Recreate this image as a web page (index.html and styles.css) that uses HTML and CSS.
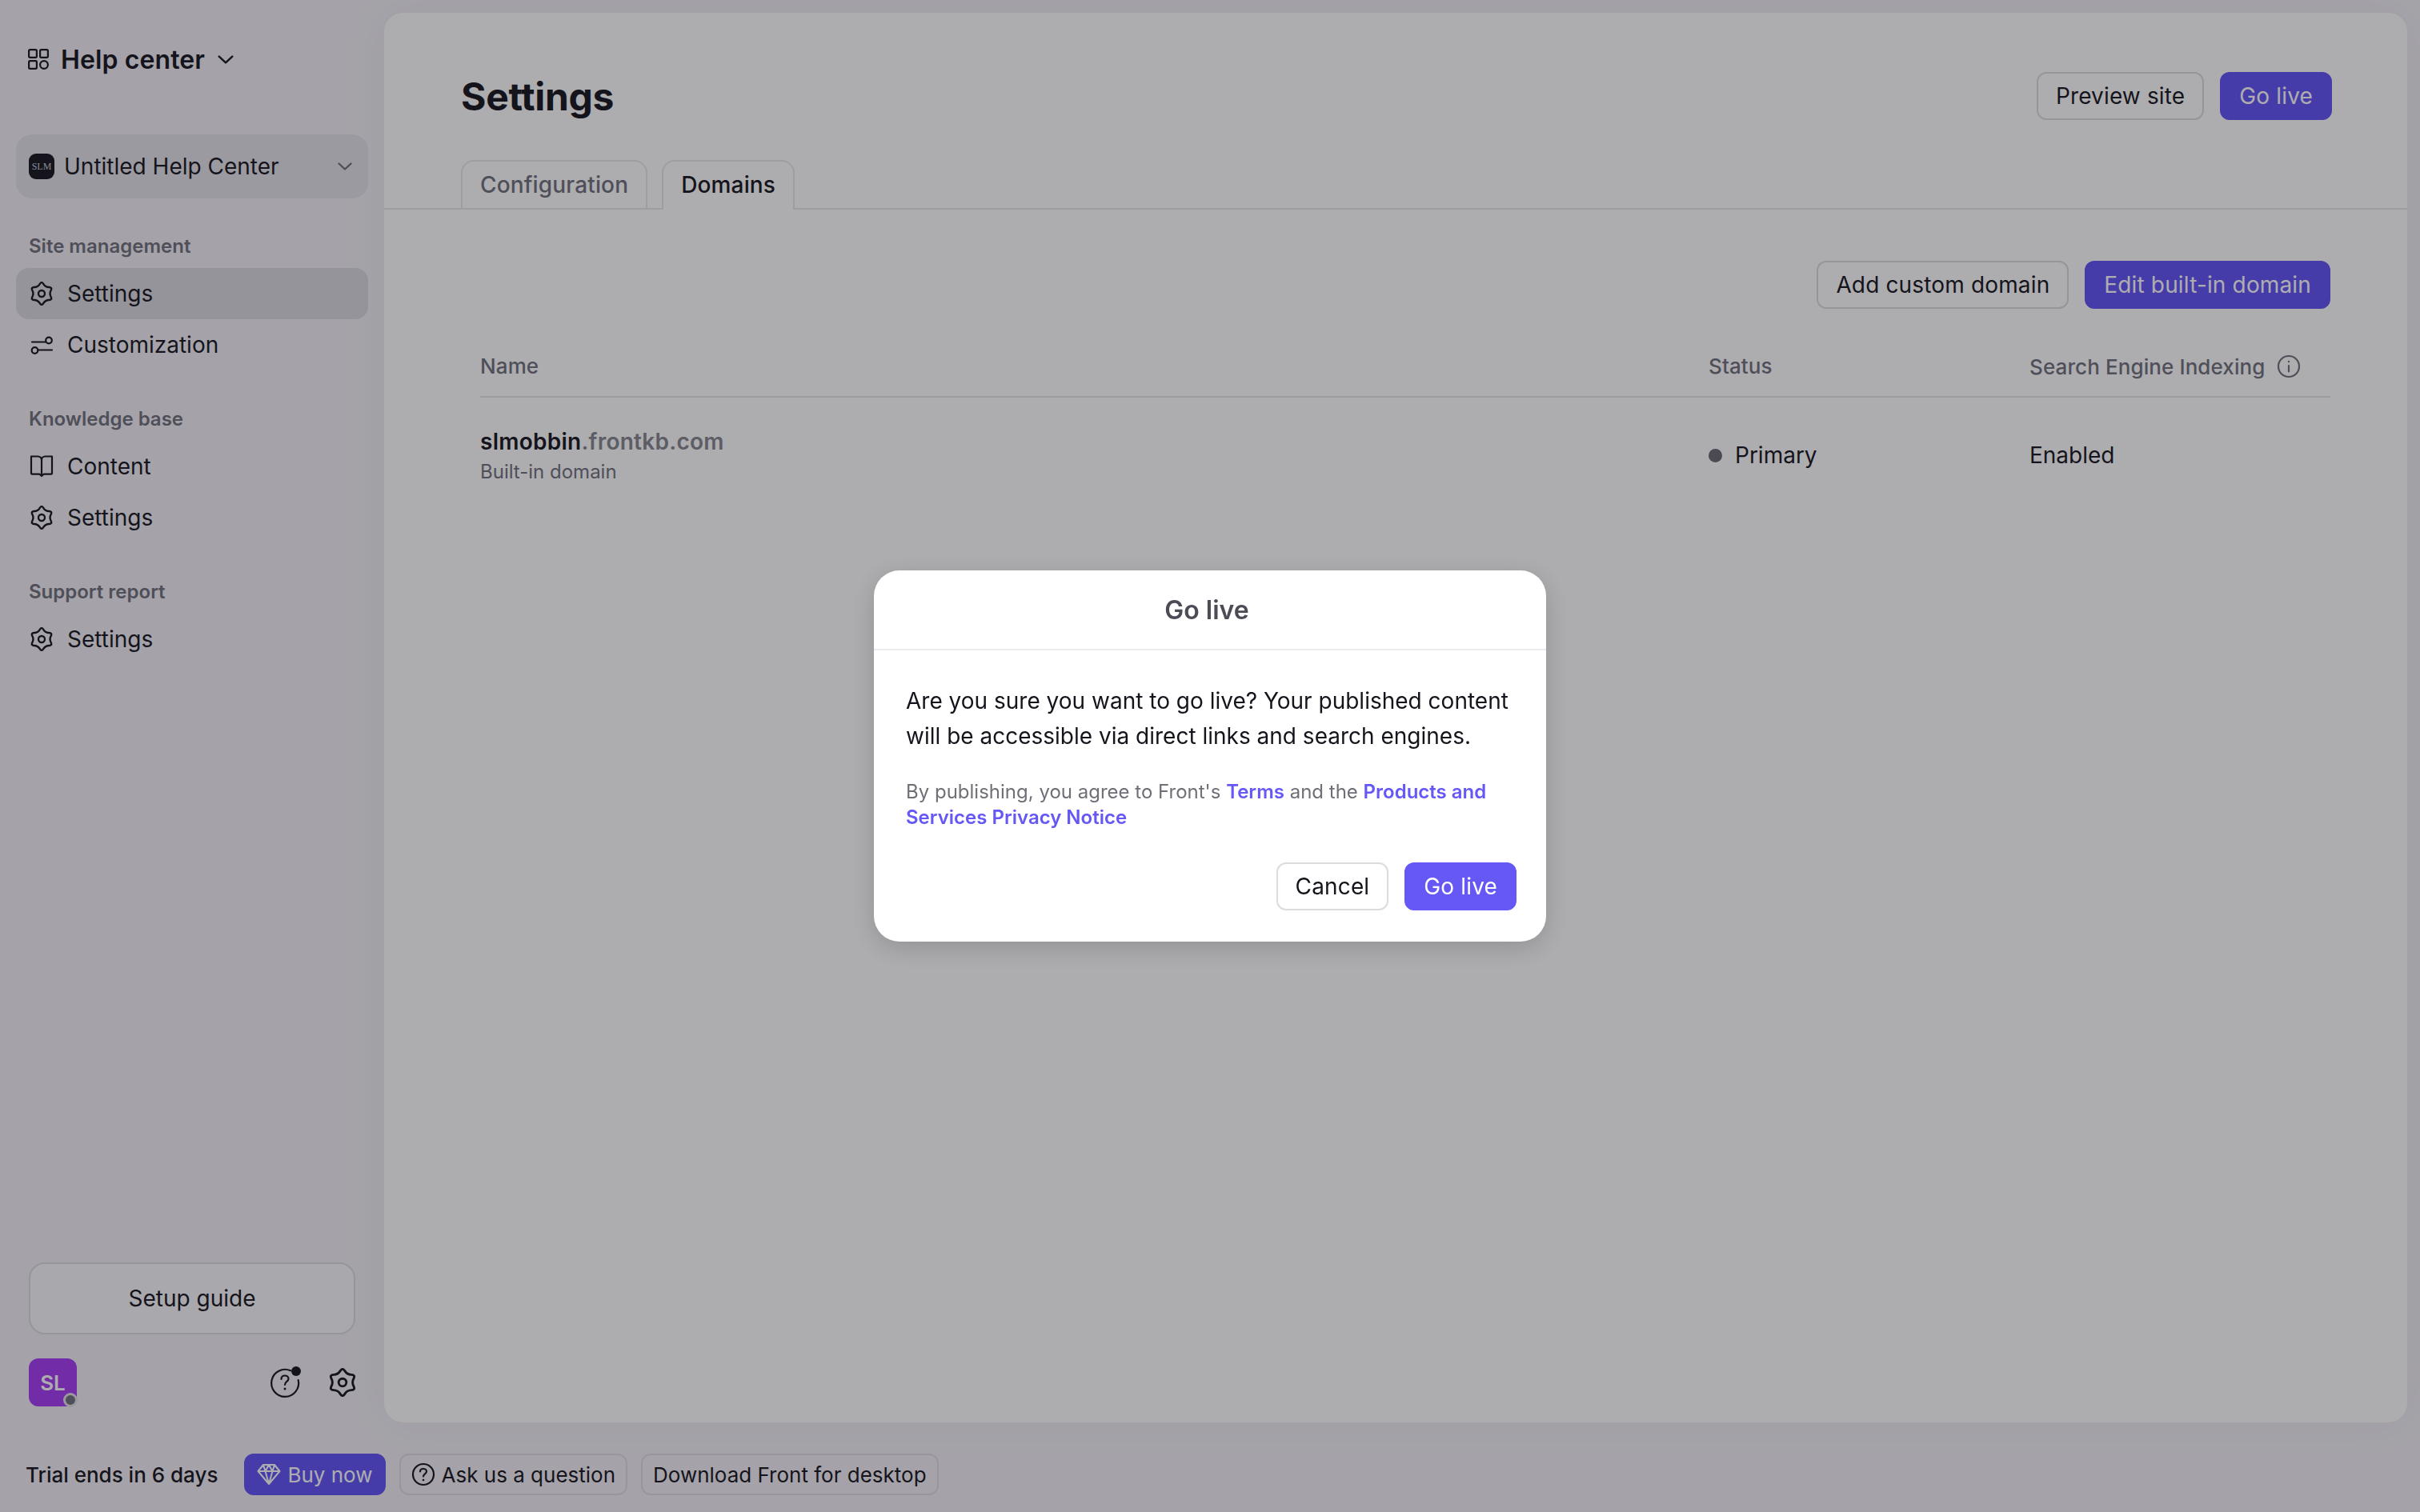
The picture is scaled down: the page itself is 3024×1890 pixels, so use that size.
FILE: index.html
```html
<!DOCTYPE html>
<html>

<head>
    <title>Help center settings</title>
    <link rel="stylesheet" href="styles.css">
</head>

<body>
    <svg class="icon-defs" width="0" height="0">
        <symbol id="gear" viewBox="0 0 24 24">
            <path d="M10.1 2.41Q12 -.6 13.9 2.41Q15.8 5.42 19.36 5.56Q22.91 5.7 21.26 8.85Q19.6 12 21.26 15.15Q22.91 18.3 19.36 18.44Q15.8 18.58 13.9 21.59Q12 24.6 10.1 21.59Q8.2 18.58 4.65 18.44Q1.09 18.3 2.75 15.15Q4.4 12 2.75 8.85Q1.09 5.7 4.65 5.56Q8.2 5.42 10.1 2.41Z" fill="none" stroke="currentColor" stroke-width="1.9" stroke-linejoin="round"/>
            <circle cx="12" cy="12" r="3.2" fill="none" stroke="currentColor" stroke-width="1.9"/>
        </symbol>
        <symbol id="chevron" viewBox="0 0 18 10">
            <path d="M1.5 1.5L9 8.5L16.5 1.5" fill="none" stroke="currentColor" stroke-width="2.2" stroke-linecap="round" stroke-linejoin="round"/>
        </symbol>
    </svg>

    <div class="app">
        <aside class="sidebar">
            <div class="product">
                <svg class="product-icon" viewBox="0 0 26 26" fill="none" stroke="currentColor" stroke-width="2.2">
                    <rect x="1.1" y="1.1" width="9.8" height="9.8" rx="1.6"/>
                    <rect x="15.1" y="1.1" width="9.8" height="9.8" rx="1.6"/>
                    <rect x="1.1" y="15.1" width="9.8" height="9.8" rx="1.6"/>
                    <circle cx="20" cy="20" r="4.9"/>
                </svg>
                <span>Help center</span>
                <svg class="product-chevron"><use href="#chevron"/></svg>
            </div>

            <div class="center-select">
                <div class="center-logo">SLM</div>
                <span class="center-name">Untitled Help Center</span>
                <svg class="center-chevron"><use href="#chevron"/></svg>
            </div>

            <div class="nav-section">
                <div class="nav-label">Site management</div>
                <div class="nav-item active"><svg class="nav-icon"><use href="#gear"/></svg>Settings</div>
                <div class="nav-item">
                    <svg class="nav-icon" viewBox="0 0 30 30" fill="none" stroke="currentColor" stroke-width="2.2" stroke-linecap="round">
                        <path d="M3 11.5H20"/>
                        <circle cx="24" cy="9.5" r="3.8"/>
                        <path d="M11 21.5H28"/>
                        <circle cx="6.5" cy="22" r="3.8"/>
                    </svg>Customization
                </div>
            </div>

            <div class="nav-section">
                <div class="nav-label">Knowledge base</div>
                <div class="nav-item">
                    <svg class="nav-icon" viewBox="0 0 30 30" fill="none" stroke="currentColor" stroke-width="2.2" stroke-linejoin="round">
                        <path d="M15 7C15 4.5 13 2.5 10.5 2.5H2V23.5C2 24.2 2.5 24.7 3.2 24.7H12.4L15 27L17.6 24.7H26.8C27.5 24.7 28 24.2 28 23.5V2.5H19.5C17 2.5 15 4.5 15 7ZM15 7V26"/>
                    </svg>Content
                </div>
                <div class="nav-item"><svg class="nav-icon"><use href="#gear"/></svg>Settings</div>
            </div>

            <div class="nav-section">
                <div class="nav-label">Support report</div>
                <div class="nav-item"><svg class="nav-icon"><use href="#gear"/></svg>Settings</div>
            </div>

            <div class="sidebar-bottom">
                <div class="setup-guide">Setup guide</div>
                <div class="user-row">
                    <div class="avatar">SL<span class="avatar-status"></span></div>
                    <svg class="help-icon" viewBox="0 0 40 40" fill="none">
                        <path d="M27 5.3A17 17 0 1 0 36.7 17" stroke="currentColor" stroke-width="2.2" stroke-linecap="round"/>
                        <path d="M15.5 16C15.5 13 17.5 11.5 20 11.5C22.5 11.5 24.5 13.2 24.5 15.5C24.5 19 20 19 20 23" stroke="currentColor" stroke-width="2.2" stroke-linecap="round"/>
                        <circle cx="20" cy="28" r="1.5" fill="currentColor"/>
                        <circle cx="34" cy="6" r="6" fill="currentColor"/>
                    </svg>
                    <svg class="user-gear"><use href="#gear"/></svg>
                </div>
            </div>
        </aside>

        <main class="main">
            <div class="page-header">
                <h1>Settings</h1>
                <div class="btn-row">
                    <button class="btn">Preview site</button>
                    <button class="btn btn-primary">Go live</button>
                </div>
            </div>

            <div class="tabs">
                <div class="tab">Configuration</div>
                <div class="tab tab-active">Domains</div>
            </div>

            <div class="domains">
                <div class="btn-row domain-actions">
                    <button class="btn">Add custom domain</button>
                    <button class="btn btn-primary">Edit built-in domain</button>
                </div>

                <div class="table-head">
                    <div>Name</div>
                    <div>Status</div>
                    <div class="indexing-head">Search Engine Indexing
                        <svg class="info-icon" viewBox="0 0 30 30" fill="none" stroke="currentColor" stroke-width="2.2" stroke-linecap="round">
                            <circle cx="15" cy="15" r="13"/>
                            <path d="M15 14V21.5"/>
                            <circle cx="15" cy="9" r="1.2" fill="currentColor" stroke="none"/>
                        </svg>
                    </div>
                </div>

                <div class="table-row">
                    <div>
                        <div class="domain-name"><b>slmobbin</b>.frontkb.com</div>
                        <div class="domain-type">Built-in domain</div>
                    </div>
                    <div class="status"><span class="status-dot"></span>Primary</div>
                    <div>Enabled</div>
                </div>
            </div>
        </main>
    </div>

    <div class="bottom-bar">
        <span class="trial">Trial ends in 6 days</span>
        <div class="chip chip-buy">
            <svg class="chip-icon diamond" viewBox="0 0 30 28" fill="none" stroke="currentColor" stroke-width="2" stroke-linejoin="round">
                <path d="M8 2H22L28.5 10L15 26L1.5 10ZM1.5 10H28.5M8 2L10.5 10L15 26L19.5 10L22 2M10.5 10L15 2L19.5 10"/>
            </svg>Buy now
        </div>
        <div class="chip">
            <svg class="chip-icon" viewBox="0 0 30 30" fill="none" stroke="currentColor" stroke-width="2.2" stroke-linecap="round">
                <circle cx="15" cy="15" r="13"/>
                <path d="M11 11.5C11 9 13 8 15 8C17 8 19 9.3 19 11.3C19 14.3 15 14.3 15 17.5"/>
                <circle cx="15" cy="22" r="1.3" fill="currentColor" stroke="none"/>
            </svg>Ask us a question
        </div>
        <div class="chip">Download Front for desktop</div>
    </div>

    <!-- Go live dialog and its backdrop -->
    <div class="backdrop">
        <div class="modal">
            <div class="modal-title">Go live</div>
            <div class="modal-body">
                <p class="modal-text">Are you sure you want to go live? Your published content will be accessible via direct links and search engines.</p>
                <p class="modal-note">By publishing, you agree to Front's <a href="#">Terms</a> and the <a href="#">Products and Services Privacy Notice</a></p>
                <div class="btn-row modal-actions">
                    <button class="btn btn-modal">Cancel</button>
                    <button class="btn btn-primary btn-modal">Go live</button>
                </div>
            </div>
        </div>
    </div>
</body>

</html>
```

FILE: styles.css
```css
* {
    box-sizing: border-box;
}

body {
    font-family: Inter, "Liberation Sans", sans-serif;
    font-size: 28px;
    color: #1f1e27;
    background-color: #f3f1f5;
    margin: 0;
    width: 3024px;
    height: 1890px;
    overflow: hidden;
}

.icon-defs {
    position: absolute;
}

.app {
    display: flex;
    height: 1778px;
}

/* Sidebar */

.sidebar {
    width: 480px;
    padding: 0 20px;
    display: flex;
    flex-direction: column;
    flex-shrink: 0;
}

.product {
    display: flex;
    align-items: center;
    height: 32px;
    margin-top: 58px;
    padding-left: 15px;
    font-size: 32px;
    font-weight: 600;
    letter-spacing: 0.1px;
}

.product-icon {
    width: 26px;
    height: 26px;
    margin-right: 15px;
}

.product-chevron {
    width: 20px;
    height: 11px;
    margin-left: 16px;
}

.center-select {
    display: flex;
    align-items: center;
    height: 80px;
    margin-top: 78px;
    padding: 0 16px;
    background-color: #e6e4e9;
    border-radius: 20px;
}

.center-logo {
    width: 32px;
    height: 32px;
    border-radius: 9px;
    background-color: #1f1e27;
    color: #c9c9cf;
    font-family: "Liberation Serif", serif;
    font-size: 12px;
    display: flex;
    align-items: center;
    justify-content: center;
    flex-shrink: 0;
}

.center-name {
    margin-left: 12px;
    flex: 1;
}

.center-chevron {
    width: 18px;
    height: 10px;
    margin-right: 4px;
    color: #707078;
}

.nav-section {
    margin-bottom: 32px;
}

.center-select + .nav-section {
    margin-top: 31px;
}

.nav-label {
    height: 56px;
    display: flex;
    align-items: center;
    padding-left: 16px;
    font-size: 24px;
    font-weight: 600;
    color: #75757f;
}

.nav-item {
    display: flex;
    align-items: center;
    height: 64px;
    padding-left: 17px;
    border-radius: 16px;
}

.nav-item.active {
    background-color: #dcdbe0;
}

.nav-icon {
    width: 30px;
    height: 30px;
    margin-right: 17px;
    flex-shrink: 0;
}

.sidebar-bottom {
    margin-top: auto;
    padding: 0 16px 20px;
}

.setup-guide {
    height: 90px;
    display: flex;
    align-items: center;
    justify-content: center;
    background-color: #f9f8fa;
    border: 2px solid #dddce1;
    border-radius: 20px;
}

.user-row {
    display: flex;
    align-items: center;
    margin-top: 30px;
}

.avatar {
    width: 60px;
    height: 60px;
    position: relative;
    display: flex;
    align-items: center;
    justify-content: center;
    background-color: #a841f3;
    border-radius: 12px;
    color: #ffffff;
    font-size: 26px;
    font-weight: 600;
}

.avatar-status {
    position: absolute;
    right: -1px;
    bottom: -1px;
    width: 18px;
    height: 18px;
    background-color: #75757f;
    border: 3px solid #e0e0e4;
    border-radius: 50%;
}

.help-icon {
    width: 40px;
    height: 40px;
    margin-left: auto;
    margin-top: -1px;
}

.user-gear {
    width: 36px;
    height: 36px;
    margin-left: 34px;
    margin-right: -2px;
}

/* Main panel */

.main {
    flex: 1;
    margin: 16px 16px 0 0;
    background-color: #ffffff;
    border-radius: 24px;
    box-shadow: 0 0 60px rgba(0, 0, 0, 0.04);
}

.page-header {
    display: flex;
    align-items: center;
    justify-content: space-between;
    padding: 74px 94px 0 96px;
}

.page-header h1 {
    margin: 0;
    font-size: 48px;
    font-weight: 700;
    letter-spacing: -0.3px;
}

.btn-row {
    display: flex;
    gap: 20px;
}

.btn {
    height: 60px;
    padding: 0 22px;
    font-family: inherit;
    font-size: 28px;
    font-weight: 400;
    letter-spacing: 0.15px;
    color: inherit;
    background-color: #ffffff;
    border: 2px solid #dcdcdf;
    border-radius: 12px;
}

.btn-primary {
    color: #ffffff;
    background-color: #6658f5;
    border-color: #6658f5;
}

.tabs {
    display: flex;
    gap: 18px;
    height: 62px;
    margin-top: 50px;
    padding-left: 96px;
    border-bottom: 2px solid #e8e8eb;
}

.tab {
    height: 62px;
    padding: 0 22px 3px;
    display: flex;
    align-items: center;
    color: #75757f;
    font-weight: 500;
    letter-spacing: 0.15px;
    border: 2px solid #e8e8eb;
    border-bottom: none;
    border-radius: 16px 16px 0 0;
}

.tab-active {
    color: #1f1e27;
    background-color: #ffffff;
    position: relative;
}

.domains {
    padding: 64px 96px 0 120px;
}

.domain-actions {
    justify-content: flex-end;
}

.table-head {
    display: grid;
    grid-template-columns: 1535px 401px 1fr;
    height: 111px;
    padding-top: 56px;
    color: #75757f;
    font-size: 26px;
    font-weight: 500;
    letter-spacing: 0.1px;
    border-bottom: 2px solid #e6e6e9;
}

.indexing-head {
    display: flex;
    gap: 14px;
    height: 32px;
    align-items: center;
}

.info-icon {
    width: 30px;
    height: 30px;
}

.table-row {
    display: grid;
    grid-template-columns: 1535px 401px 1fr;
    align-items: center;
    height: 144px;
}

.domain-name {
    font-weight: 600;
    color: #8a8a93;
    letter-spacing: 0.25px;
}

.domain-name b {
    color: #1f1e27;
    font-weight: 600;
}

.domain-type {
    margin-top: 6px;
    font-size: 24px;
    color: #75757f;
}

.status {
    display: flex;
    align-items: center;
}

.status-dot {
    width: 17px;
    height: 17px;
    margin-right: 16px;
    background-color: #6e6e76;
    border-radius: 50%;
}

/* Bottom bar */

.bottom-bar {
    display: flex;
    align-items: center;
    height: 112px;
    padding: 18px 0 0 32px;
    gap: 17px;
    font-size: 26px;
}

.trial {
    font-weight: 500;
    margin-right: 16px;
}

.chip {
    display: flex;
    align-items: center;
    height: 52px;
    padding: 0 13px;
    border: 2px solid #e0dee4;
    border-radius: 12px;
}

.chip-buy {
    padding: 0 14px;
    color: #ffffff;
    background-color: #6658f5;
    border-color: #6658f5;
}

.chip-icon {
    width: 30px;
    height: 30px;
    margin-right: 8px;
}

.diamond {
    height: 28px;
}

/* Dialog */

.backdrop {
    position: fixed;
    inset: 0;
    display: flex;
    align-items: center;
    justify-content: center;
    background-color: rgba(0, 0, 8, 0.32);
}

.modal {
    width: 840px;
    height: 464px;
    background-color: #ffffff;
    border-radius: 32px;
    box-shadow: 0 8px 32px rgba(0, 0, 0, 0.16);
}

.modal-title {
    height: 100px;
    display: flex;
    align-items: center;
    justify-content: center;
    padding-right: 8px;
    font-size: 32px;
    font-weight: 600;
    color: #4c4c56;
    border-bottom: 2px solid #ebebf0;
}

.modal-body {
    padding: 41px 37px 0 40px;
}

.modal-text {
    margin: 0;
    font-size: 28px;
    line-height: 44px;
    color: #14141c;
}

.modal-note {
    margin: 32px 0 0;
    font-size: 24px;
    line-height: 32px;
    color: #6f6f78;
}

.modal-note a {
    color: #6658f5;
    font-weight: 600;
    text-decoration: none;
}

.modal-actions {
    justify-content: flex-end;
    margin-top: 40px;
}

.btn-modal {
    color: #14141c;
}

.btn-primary.btn-modal {
    color: #ffffff;
}
```
